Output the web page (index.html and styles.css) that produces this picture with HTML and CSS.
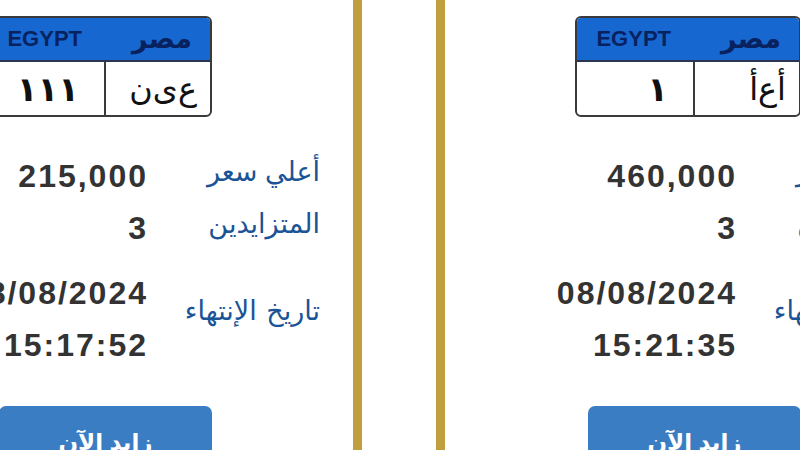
FILE: index.html
```html
<!DOCTYPE html>
<html lang="ar">
<head>
<meta charset="utf-8">
<title>مزاد اللوحات</title>
<link rel="stylesheet" href="styles.css">
</head>
<body>
<div class="strip">
  <div class="card">
    <div class="plate">
      <div class="plate-head"><span class="half">مصر</span><span class="half en">EGYPT</span></div>
      <div class="plate-body"><span class="half letters">ع&#8204;ى&#8204;ن</span><span class="half nums">١١١</span></div>
    </div>
    <div class="row first"><div class="val">215,000</div><div class="lbl">أعلي سعر</div></div>
    <div class="row"><div class="val">3</div><div class="lbl">المتزايدين</div></div>
    <div class="row last"><div class="val">08/08/2024<br>15:17:52</div><div class="lbl">تاريخ الإنتهاء</div></div>
    <button class="bid">زايد الآن</button>
  </div>
  <div class="card">
    <div class="plate">
      <div class="plate-head"><span class="half">مصر</span><span class="half en">EGYPT</span></div>
      <div class="plate-body"><span class="half letters">أ&#8204;ع&#8204;أ</span><span class="half nums">١</span></div>
    </div>
    <div class="row first"><div class="val">460,000</div><div class="lbl">أعلي سعر</div></div>
    <div class="row"><div class="val">3</div><div class="lbl">المتزايدين</div></div>
    <div class="row last"><div class="val">08/08/2024<br>15:21:35</div><div class="lbl">تاريخ الإنتهاء</div></div>
    <button class="bid">زايد الآن</button>
  </div>
</div>
</body>
</html>
```
FILE: styles.css
```css
html, body {
  margin: 0;
  padding: 0;
  background: #ffffff;
}
body {
  width: 800px;
  height: 450px;
  overflow: hidden;
  font-family: "Liberation Sans", "DejaVu Sans", sans-serif;
}
.strip {
  display: flex;
  gap: 74px;
  margin-left: -153px;
}
.card {
  flex: 0 0 515px;
  box-sizing: border-box;
  height: 450px;
  border-left: 9px solid #bf9f3e;
  border-right: 9px solid #bf9f3e;
  display: flex;
  flex-direction: column;
  align-items: flex-start;
}
.card > * {
  flex-shrink: 0;
}
.plate {
  margin-top: 16px;
  margin-left: 130px;
  width: 226px;
  height: 101px;
  box-sizing: border-box;
  border: 2px solid #3a3a3a;
  border-radius: 6px;
  overflow: hidden;
  direction: rtl;
  display: flex;
  flex-direction: column;
}
.plate-head {
  height: 42px;
  flex-shrink: 0;
  background: #1767d1;
  border-bottom: 2px solid #2a3550;
  display: flex;
  align-items: center;
}
.plate-head .half {
  flex: 1;
  text-align: right;
  padding-right: 18px;
  color: #082260;
  font-weight: bold;
  font-size: 27px;
}
.plate-head .en {
  font-size: 22px;
  letter-spacing: 0;
  padding-right: 16px;
}
.plate-body {
  flex: 1;
  display: flex;
  align-items: stretch;
}
.plate-body .half {
  flex: 1;
  display: flex;
  align-items: center;
  color: #111;
}
.plate-body .letters {
  border-left: 2px solid #3a3a3a;
  padding-right: 13px;
  font-size: 32px;
  letter-spacing: 1px;
}
.plate-body .nums {
  padding-right: 25px;
  font-size: 34px;
  font-weight: bold;
  letter-spacing: 2px;
}
.row {
  display: grid;
  grid-template-columns: 292px 172px;
  align-items: center;
}
.row.first {
  margin-top: 33px;
}
.row.last {
  margin-top: 13px;
}
.val {
  text-align: right;
  font-size: 32px;
  line-height: 52px;
  font-weight: bold;
  color: #333333;
  letter-spacing: 2px;
}
.lbl {
  direction: rtl;
  text-align: right;
  font-size: 27px;
  color: #1a5496;
  padding-bottom: 8px;
}
.row.last .lbl {
  padding-bottom: 16px;
  word-spacing: 2px;
}
.bid {
  margin-top: 35px;
  margin-left: 143px;
  width: 213px;
  height: 60px;
  border: none;
  border-radius: 7px;
  background: #3b7dc3;
  color: #ffffff;
  font-family: "Liberation Sans", "DejaVu Sans", sans-serif;
  font-size: 23px;
  font-weight: bold;
  padding: 12px 0 0;
  line-height: 44px;
  text-align: center;
  display: block;
}
```
